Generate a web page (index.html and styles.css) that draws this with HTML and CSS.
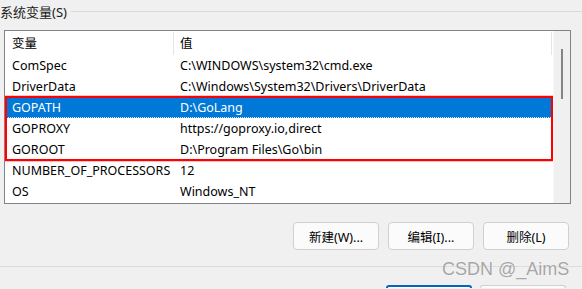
FILE: index.html
```html
<!DOCTYPE html>
<html>
<head>
<meta charset="utf-8">
<link rel="stylesheet" href="styles.css">
</head>
<body>
<div class="group-head">
  <span class="group-label">系统变量(S)</span>
  <span class="group-line"></span>
</div>
<div class="listbox">
  <div class="list">
    <div class="header">
      <div class="hcell c1">变量</div>
      <div class="hcell c2">值</div>
    </div>
    <div class="row"><div class="c1">ComSpec</div><div class="c2">C:\WINDOWS\system32\cmd.exe</div></div>
    <div class="row"><div class="c1">DriverData</div><div class="c2">C:\Windows\System32\Drivers\DriverData</div></div>
    <div class="row selected"><div class="c1">GOPATH</div><div class="c2">D:\GoLang</div></div>
    <div class="row"><div class="c1">GOPROXY</div><div class="c2">https://goproxy.io,direct</div></div>
    <div class="row"><div class="c1">GOROOT</div><div class="c2">D:\Program Files\Go\bin</div></div>
    <div class="row"><div class="c1">NUMBER_OF_PROCESSORS</div><div class="c2">12</div></div>
    <div class="row"><div class="c1">OS</div><div class="c2">Windows_NT</div></div>
    <div class="mark"></div>
  </div>
  <div class="scrollbar"><div class="thumb"></div></div>
</div>
<div class="actions">
  <button class="btn">新建(W)...</button>
  <button class="btn">编辑(I)...</button>
  <button class="btn">删除(L)</button>
</div>
<div class="separator"></div>
<div class="footer">
  <span class="fbtn primary"></span>
  <span class="fbtn"></span>
</div>
<div class="watermark">CSDN @_AimS</div>
</body>
</html>
```

FILE: styles.css
```css
* { box-sizing: border-box; }
html, body { margin: 0; padding: 0; }
body {
  width: 582px;
  height: 289px;
  overflow: hidden;
  background: #f0f0f0;
  font-family: "Noto Sans", "Noto Sans CJK SC", sans-serif;
  font-size: 12.5px;
  color: #000;
  position: relative;
}
.group-head {
  display: flex;
  align-items: center;
  height: 22px;
}
.group-label {
  font-size: 13px;
  line-height: 22px;
  margin-top: 1px;
  color: #1a1a1a;
}
.group-line {
  flex: 1;
  height: 1px;
  background: #dadada;
  margin-left: 4px;
}
.listbox {
  margin: 8px 0 0 4px;
  width: 567px;
  height: 174px;
  border: 1px solid #82828b;
  display: flex;
  background: #fff;
}
.list {
  width: 548px;
  position: relative;
  background: #fff;
}
.header {
  display: flex;
  height: 24px;
  align-items: center;
}
.hcell { height: 23px; line-height: 24px; margin-top: 1px; }
.header .c1 { border-right: 1px solid #e5e5e5; }
.header .c2 { border-right: 1px solid #e5e5e5; }
.c1 { width: 169px; padding-left: 7px; flex: none; white-space: nowrap; }
.c2 { width: 378px; padding-left: 6px; flex: none; white-space: nowrap; }
.row {
  display: flex;
  height: 21px;
  line-height: 22px;
}
.row.selected {
  background: #0078d7;
  color: #fff;
  border-bottom: 1px dotted #cfe3f5;
  line-height: 21px;
}
.mark {
  position: absolute;
  left: 0;
  top: 65px;
  width: 548px;
  height: 65px;
  border: 2px solid #ff0000;
  box-shadow: 0 0 0 1px rgba(255, 80, 80, 0.35);
}
.scrollbar {
  width: 17px;
  background: #f0f0f0;
  position: relative;
  border-left: 1px solid #f7f7f7;
}
.thumb {
  position: absolute;
  left: 7px;
  top: 18px;
  width: 2px;
  height: 50px;
  background: #858585;
}
.actions {
  display: flex;
  justify-content: flex-end;
  gap: 9px;
  padding-right: 13px;
  margin-top: 18px;
}
.btn {
  width: 86px;
  height: 28px;
  background: #fbfbfb;
  border: 1px solid #d0d0d0;
  border-radius: 4px;
  font-family: "Noto Sans", "Noto Sans CJK SC", sans-serif;
  font-size: 12.5px;
  color: #000;
  padding: 0;
}
.separator {
  height: 1px;
  background: #dcdcdc;
  margin-top: 16px;
}
.footer {
  display: flex;
  justify-content: flex-end;
  gap: 8px;
  padding-right: 16px;
  margin-top: 18px;
  height: 3px;
}
.fbtn {
  width: 86px;
  height: 3px;
  border: 1px solid #d0d0d0;
  border-bottom: none;
  border-radius: 4px 4px 0 0;
  background: #fbfbfb;
}
.fbtn.primary {
  border: 2px solid #0067c0;
  border-bottom: none;
}
.watermark {
  position: absolute;
  left: 442px;
  top: 259px;
  font-family: "Liberation Sans", Arial, sans-serif;
  font-size: 18px;
  color: #a6a6a6;
  text-shadow: 0 0 1px #fff;
}
```
